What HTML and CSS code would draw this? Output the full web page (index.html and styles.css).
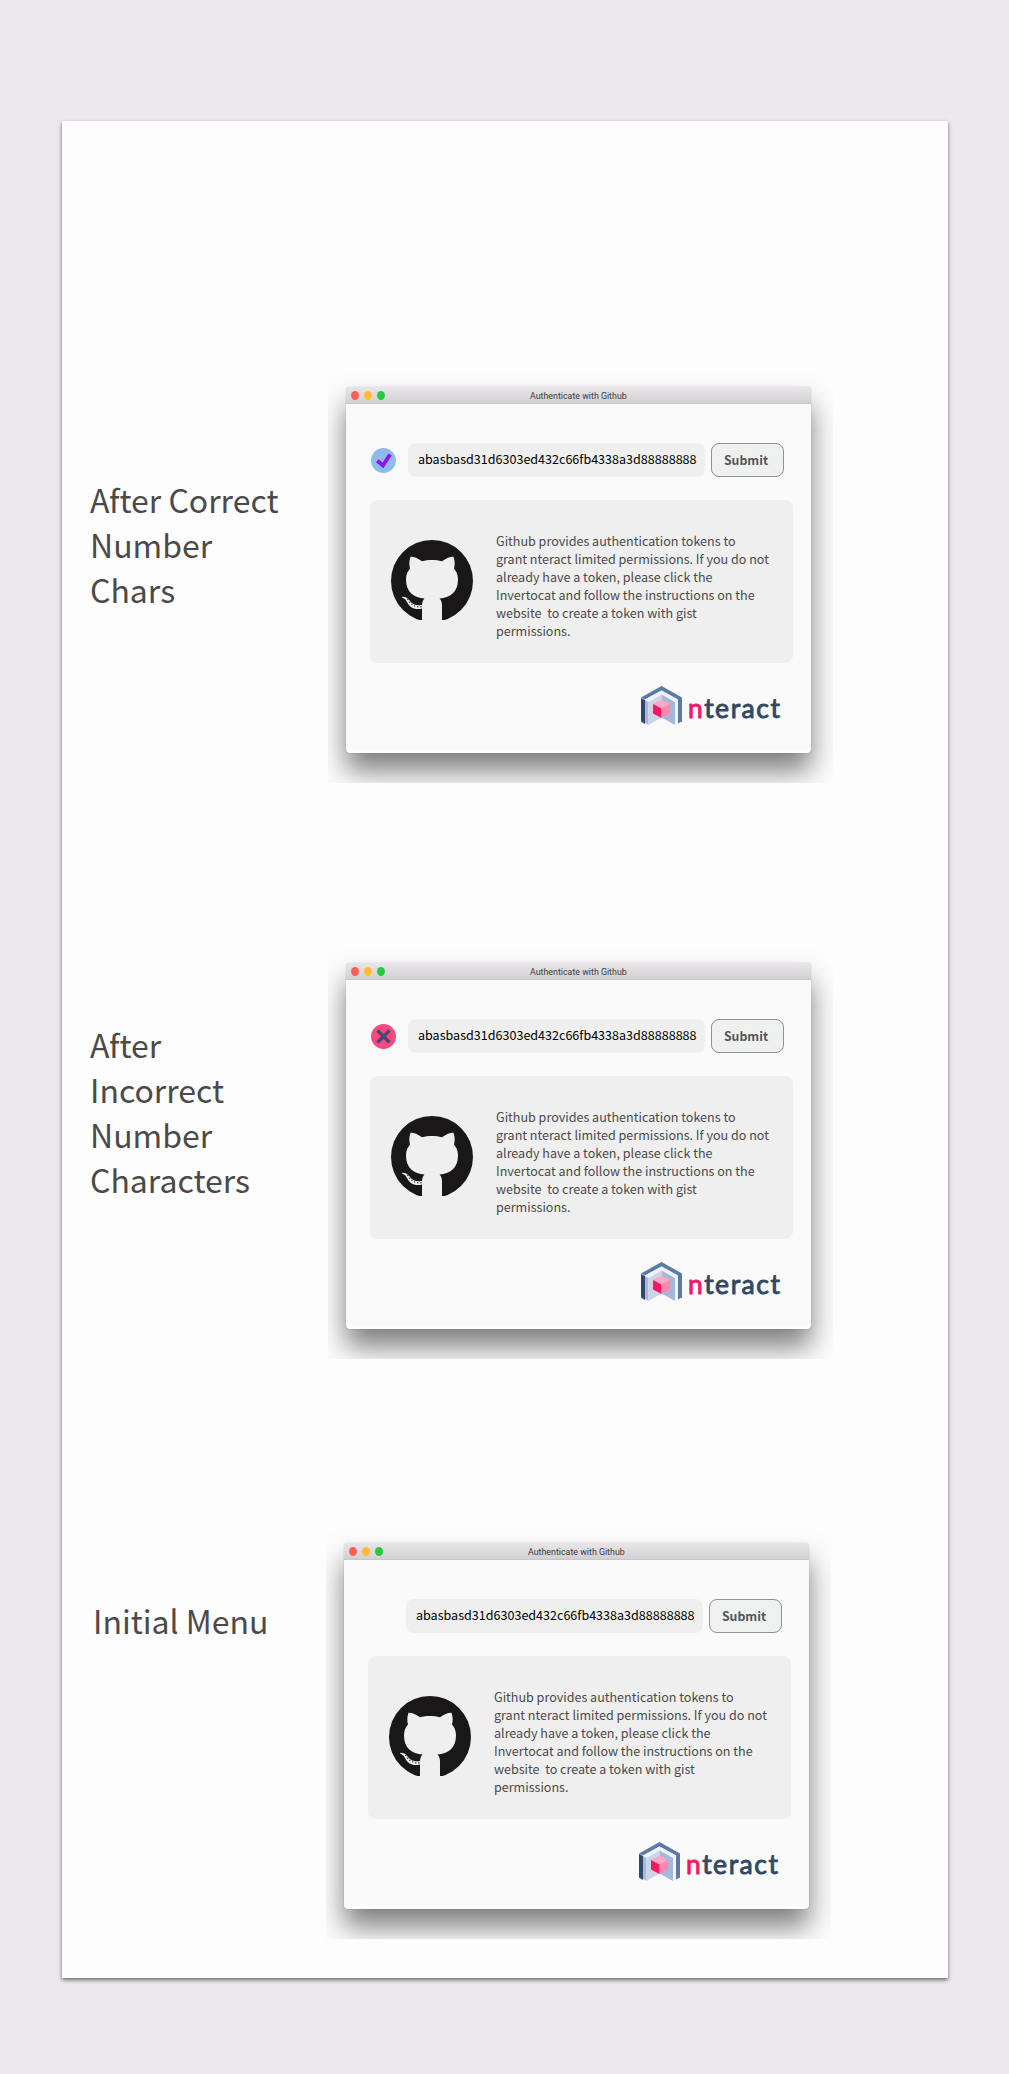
FILE: index.html
```html
<!DOCTYPE html>
<html lang="en">
<head>
<meta charset="utf-8">
<title>Authenticate with Github</title>
<link rel="stylesheet" href="styles.css">
</head>
<body>
<svg class="defs" aria-hidden="true">
  <symbol id="invertocat" viewBox="0 0 82 80">
    <circle cx="41" cy="41" r="41" fill="#191717"/>
    <path class="cut" d="M31 82V68.500C27 69.500 20 70 16 62C14 58 12 58.500 11 57.500C11 56 16 56.500 19 61C22 65 26 66 31 65C31.200 62 32 60 33.500 58.500C23 57.500 15 52.500 15 39.500C15 35 16.500 31 19 28.500C18 25 18 21 19.500 16.800C23 16.500 27 18.500 31 21.200C37 19.500 45 19.500 51 21.200C55 18.500 59 16.500 62.500 16.800C64 21 64 25 63 28.500C65.500 31 67 35 67 39.500C67 52.500 59 57.500 48.500 58.500C50.500 60.500 51 63 51 66V82Z"/>
    <path d="M16.500 59l1.800 2.800l3 3l3.500 1.700l3.500.4h2.500" fill="none" stroke="#191717" stroke-width="1.200" stroke-dasharray="1.200 2"/>
  </symbol>
  <symbol id="logo" viewBox="0 0 41 39">
    <path fill="#5b7ba5" d="M0 11.500L20.500 0L41 11.500V35.500l-4 2V13.500L20.500 4.500L4 13.500z"/>
    <path fill="#334865" d="M0 12l4 2V38l-4-2.500z"/>
    <path fill="#eef3fc" d="M4 13.500l16.500-9l16.500 9V38l-3-1V16L20.500 8.500L7.500 16V38L4 36.500z"/>
    <path fill="#a6bbdc" d="M4 14l3.500 2V39L4 36.800z"/>
    <path fill="#cbd5e9" d="M7.500 16l13-7.500V31.500L7.500 39z"/>
    <path fill="#a4b9da" d="M20.500 8.500L34 16V39L20.500 31.500z"/>
    <path fill="#ffa7c2" d="M12 18l8.500-4.500L29 18l-8.500 4.500z"/>
    <path fill="#f5175f" d="M12 18l8.500 4.500v9.500L12 27.500z"/>
    <path fill="#ff86ac" d="M29 18l-8.500 4.500v9.500l8.500-4.500z"/>
  </symbol>
</svg>
<main class="board">
  <section class="state state-correct">
    <h2 class="label">After Correct<br>Number<br>Chars</h2>
    <div class="shot">
      <div class="window">
        <header class="titlebar"><i class="dot red"></i><i class="dot yellow"></i><i class="dot green"></i><span class="title">Authenticate with Github</span></header>
        <div class="form">
          <svg class="status" viewBox="0 0 25 25"><circle cx="12.500" cy="12.500" r="12.500" fill="#90baea"/><path d="M6.300 12.800l5.600 4.700l7.200-11" fill="none" stroke="#8a12f5" stroke-width="3.800"/></svg>
          <div class="token"><span class="token-text">abasbasd31d6303ed432c66fb4338a3d88888888</span></div>
          <button class="submit">Submit</button>
        </div>
        <div class="info">
          <svg class="cat"><use href="#invertocat"/></svg>
          <p class="copy">Github provides authentication tokens to<br>grant nteract limited permissions. If you do not<br>already have a token, please click the<br>Invertocat and follow the instructions on the<br>website&nbsp; to create a token with gist<br>permissions.</p>
        </div>
        <footer class="brand"><svg class="logo"><use href="#logo"/></svg><svg class="wordmark" viewBox="0 0 92 21"><text class="word" x="0" y="18.500" textLength="92"><tspan class="n">n</tspan>teract</text></svg></footer>
      </div>
    </div>
  </section>
  <section class="state state-incorrect">
    <h2 class="label">After<br>Incorrect<br>Number<br>Characters</h2>
    <div class="shot">
      <div class="window">
        <header class="titlebar"><i class="dot red"></i><i class="dot yellow"></i><i class="dot green"></i><span class="title">Authenticate with Github</span></header>
        <div class="form">
          <svg class="status" viewBox="0 0 25 25"><circle cx="12.500" cy="12.500" r="12.500" fill="#f64a82"/><path d="M6.500 6.500l12 12m0-12l-12 12" fill="none" stroke="#3d4e70" stroke-width="3.200"/></svg>
          <div class="token"><span class="token-text">abasbasd31d6303ed432c66fb4338a3d88888888</span></div>
          <button class="submit">Submit</button>
        </div>
        <div class="info">
          <svg class="cat"><use href="#invertocat"/></svg>
          <p class="copy">Github provides authentication tokens to<br>grant nteract limited permissions. If you do not<br>already have a token, please click the<br>Invertocat and follow the instructions on the<br>website&nbsp; to create a token with gist<br>permissions.</p>
        </div>
        <footer class="brand"><svg class="logo"><use href="#logo"/></svg><svg class="wordmark" viewBox="0 0 92 21"><text class="word" x="0" y="18.500" textLength="92"><tspan class="n">n</tspan>teract</text></svg></footer>
      </div>
    </div>
  </section>
  <section class="state state-initial">
    <h2 class="label">Initial Menu</h2>
    <div class="shot">
      <div class="window">
        <header class="titlebar"><i class="dot red"></i><i class="dot yellow"></i><i class="dot green"></i><span class="title">Authenticate with Github</span></header>
        <div class="form">
          <div class="token"><span class="token-text">abasbasd31d6303ed432c66fb4338a3d88888888</span></div>
          <button class="submit">Submit</button>
        </div>
        <div class="info">
          <svg class="cat"><use href="#invertocat"/></svg>
          <p class="copy">Github provides authentication tokens to<br>grant nteract limited permissions. If you do not<br>already have a token, please click the<br>Invertocat and follow the instructions on the<br>website&nbsp; to create a token with gist<br>permissions.</p>
        </div>
        <footer class="brand"><svg class="logo"><use href="#logo"/></svg><svg class="wordmark" viewBox="0 0 92 21"><text class="word" x="0" y="18.500" textLength="92"><tspan class="n">n</tspan>teract</text></svg></footer>
      </div>
    </div>
  </section>
</main>
</body>
</html>
```
FILE: styles.css
```css
* { box-sizing: border-box; }
body {
  margin: 0;
  height: 2074px;
  padding: 121px 61px 0 62px;
  background: #ece8ed;
  font-family: "Noto Sans CJK SC", "Noto Sans", sans-serif;
  color: #4a4a4a;
}
.defs { display: block; width: 0; height: 0; }
.cut { fill: #efefef; }
.board {
  height: 1857px;
  padding-top: 249px;
  background: #fefdfe;
  box-shadow: 0 2px 4px rgba(0, 0, 0, .55);
}
.state { display: flex; align-items: flex-start; height: 576px; padding-left: 28px; }
.state-incorrect { height: 580px; }
.state-initial { height: auto; padding-left: 31px; }
.label {
  width: 238px;
  margin: 107px 0 0;
  font-size: 32px;
  font-weight: 400;
  line-height: 45px;
  white-space: nowrap;
}
.state-incorrect .label { margin-top: 76px; }
.state-initial .label { width: 233px; margin-top: 72px; }
.shot { width: 505px; height: 413px; padding: 17px 0 0 18px; overflow: hidden; }
.window {
  width: 465px;
  height: 366px;
  border-radius: 4px;
  border-bottom: 3px solid #fefefe;
  background: #fafafa;
  box-shadow: 0 0 1px rgba(0, 0, 0, .4), 0 18px 28px rgba(0, 0, 0, .5);
}
.titlebar {
  display: flex;
  align-items: center;
  gap: 5px;
  height: 17px;
  padding-left: 5px;
  border-radius: 4px 4px 0 0;
  border-bottom: 1px solid #c8c6c8;
  background: linear-gradient(#e8e6e8, #d3d0d3);
}
.dot { width: 8px; height: 9px; border-radius: 50%; }
.red { background: #ff5f57; }
.yellow { background: #ffbd2e; }
.green { background: #28ca41; }
.title {
  width: 97px;
  margin-left: 140px;
  padding-top: 2px;
  font: 8.85px/16px Roboto, sans-serif;
  color: #3c3a3c;
  white-space: nowrap;
}
.form { display: flex; justify-content: flex-end; align-items: center; gap: 6px; margin-top: 39px; padding-right: 27px; height: 34px; }
.status { width: 25px; height: 25px; margin-right: 6px; }
.token { width: 297px; height: 34px; padding-left: 10px; border-radius: 8px; background: #efefef; }
.token-text { display: block; font-size: 12.55px; line-height: 32px; color: #000; white-space: nowrap; }
.submit {
  width: 73px;
  height: 34px;
  padding: 0 3px 0 0;
  border: 1px solid #8f9192;
  border-radius: 8px;
  background: #eff1f0;
  font: 700 12.3px/32px "Noto Sans CJK SC", sans-serif;
  color: #555;
}
.info { display: flex; width: 423px; height: 163px; margin: 23px 0 0 24px; padding: 40px 0 0 21px; border-radius: 8px; background: #efefef; }
.cat { width: 82px; height: 80px; flex: none; }
.copy { margin: -8px 0 0 23px; font-size: 12.56px; line-height: 18px; white-space: nowrap; }
.brand { display: flex; margin: 23px 0 0 295px; }
.logo { width: 41px; height: 39px; }
.wordmark { width: 92px; height: 21px; margin: 13px 0 0 6px; overflow: visible; }
.word { font: 400 26.5px Lato, sans-serif; fill: #334865; stroke: #334865; stroke-width: .9px; stroke-linejoin: round; }
.n { fill: #f5175f; stroke: #f5175f; }
```
